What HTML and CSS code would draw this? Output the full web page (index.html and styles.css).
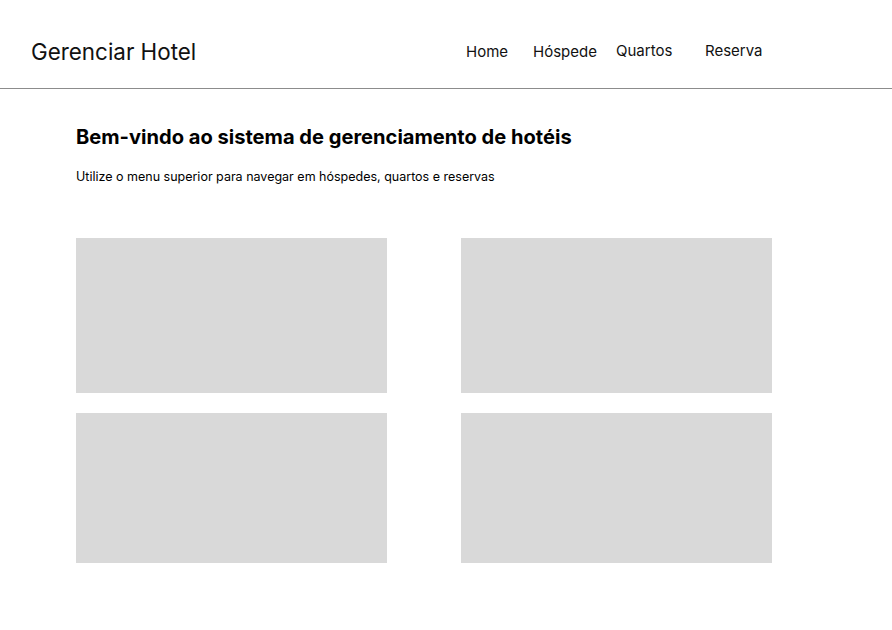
FILE: index.html
```html
<!DOCTYPE html>
<html lang="pt-BR">
<head>
<meta charset="utf-8">
<title>Gerenciar Hotel</title>
<link rel="stylesheet" href="styles.css">
</head>
<body>
<header class="topbar">
  <div class="brand">Gerenciar Hotel</div>
  <nav class="menu">
    <a class="menu-item item-home" href="#">Home</a>
    <a class="menu-item item-hospede" href="#">Hóspede</a>
    <a class="menu-item item-quartos" href="#">Quartos</a>
    <a class="menu-item item-reserva" href="#">Reserva</a>
  </nav>
</header>
<main class="content">
  <h1 class="title">Bem-vindo ao sistema de gerenciamento de hotéis</h1>
  <p class="subtitle">Utilize o menu superior para navegar em hóspedes, quartos e reservas</p>
  <section class="cards">
    <div class="card card-tall"></div>
    <div class="card card-tall"></div>
    <div class="card"></div>
    <div class="card"></div>
  </section>
</main>
</body>
</html>
```
FILE: styles.css
```css
* { box-sizing: border-box; }
html, body { margin: 0; padding: 0; background: #ffffff; }
body {
  font-family: Inter, "Noto Sans", "Liberation Sans", sans-serif;
  color: #000;
  width: 892px;
  height: 630px;
  overflow: hidden;
}
.topbar {
  height: 89px;
  border-bottom: 1px solid #8c8c8c;
  display: flex;
  align-items: center;
  padding-left: 31px;
  padding-top: 15px;
}
.brand {
  font-size: 22.4px;
  font-weight: 400;
  width: 435px;
  color: #111;
}
.menu {
  display: grid;
  grid-template-columns: 67px 83px 89px auto;
  font-size: 15px;
}
.menu-item {
  color: #111;
  text-decoration: none;
}
.item-quartos, .item-reserva { position: relative; top: -1px; }
.content {
  padding-left: 76px;
  padding-top: 36px;
}
.title {
  margin: 0;
  font-size: 20.1px;
  font-weight: 700;
  line-height: 24px;
}
.subtitle {
  margin: 20px 0 0;
  font-size: 12.5px;
  line-height: 16px;
}
.cards {
  margin-top: 53px;
  display: grid;
  grid-template-columns: 311px 311px;
  grid-template-rows: 155px 150px;
  column-gap: 74px;
  row-gap: 20px;
}
.card {
  background: #d9d9d9;
}
```
